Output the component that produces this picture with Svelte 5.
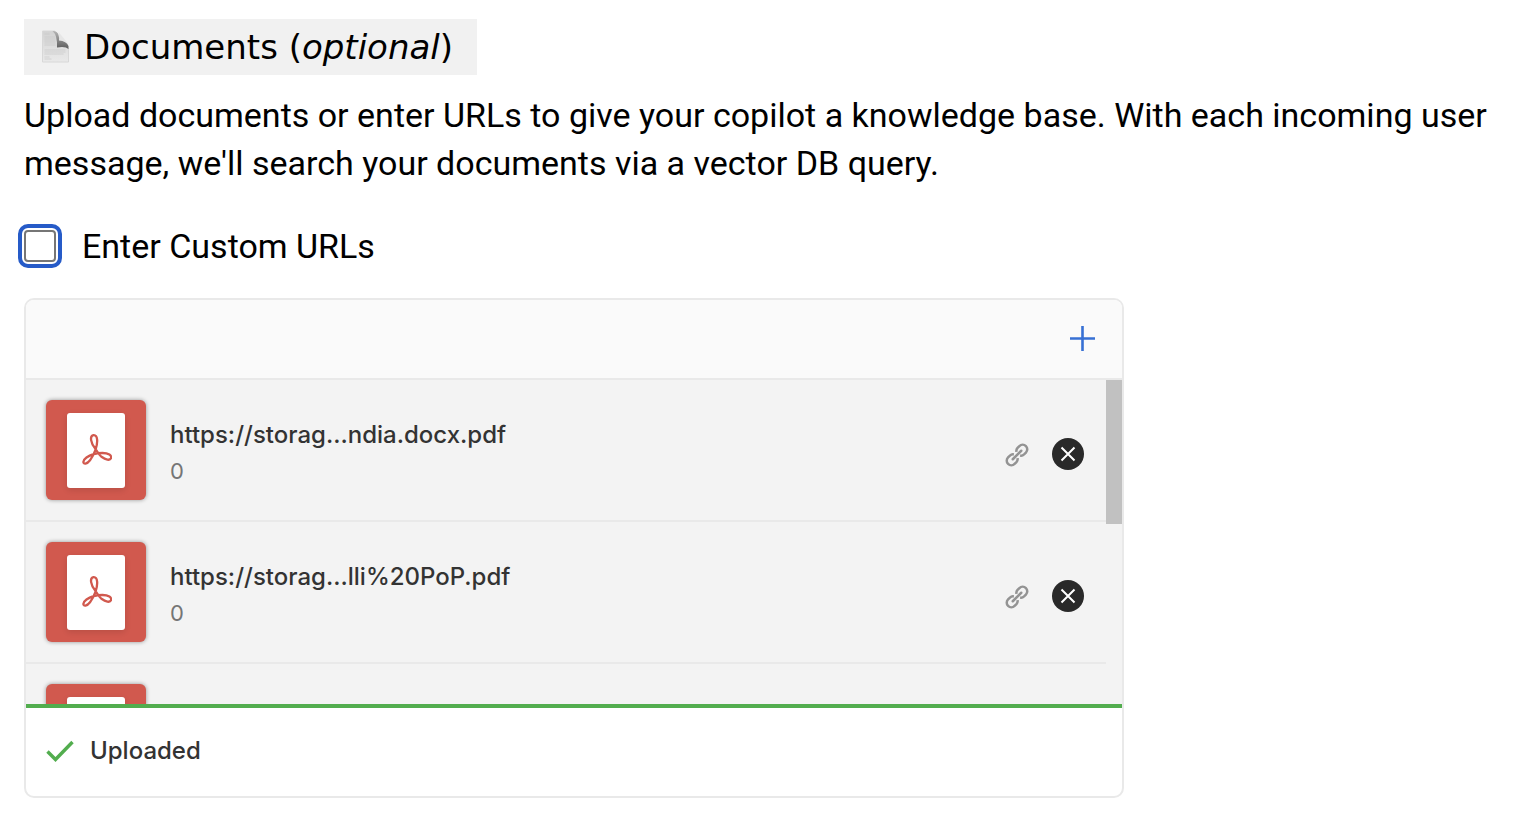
<script>
  const files = [
    { id: 1, name: 'https://storag...ndia.docx.pdf', size: '0' },
    { id: 2, name: 'https://storag...lli%20PoP.pdf', size: '0' },
    { id: 3 }
  ];
  let customUrls = $state(false);
</script>

<main>
  <h1>
    <svg class="page-icon" viewBox="0 0 28 34" aria-hidden="true">
      <defs>
        <linearGradient id="sheet" x1="0" y1="0" x2="0" y2="1">
          <stop offset="0" stop-color="#d2d2d2" />
          <stop offset="0.45" stop-color="#dedede" />
          <stop offset="1" stop-color="#e9e9e9" />
        </linearGradient>
        <linearGradient id="fold" x1="0.5" y1="0" x2="0.5" y2="1">
          <stop offset="0" stop-color="#b5b5b5" />
          <stop offset="1" stop-color="#5c5c5c" />
        </linearGradient>
      </defs>
      <path d="M1 1H13Q17 3 17 15Q25 14 27 19V32H1Z" fill="url(#sheet)" stroke="#d8d8d8" />
      <path d="M17 2L27 14Q24 12 18 11Z" fill="#e6e6e6" />
      <path d="M11 1Q16 1 17 5Q18 8 17.500 10.500Q25 11 27 16V19Q24 16 15.500 17.500Q16 5 11 1Z" fill="url(#fold)" />
      <path d="M3 4H8M3 7H14M3 9H14M3 11H14M3 13H14M3 15H14M3 20H24M3 22H24M3 24H22M3 27H8M3 29H10" stroke="#c9c9c9" stroke-width="0.7" />
    </svg>
    <span>Documents (<em>optional</em>)</span>
  </h1>
  <p class="intro">
    Upload documents or enter URLs to give your copilot a knowledge base. With each incoming user message, we'll search your documents via a vector DB query.
  </p>
  <label class="check">
    <input type="checkbox" bind:checked={customUrls} />
    <span>Enter Custom URLs</span>
  </label>

  <section class="uploader">
    <header>
      <button class="add" aria-label="Add files">
        <svg width="26" height="26" viewBox="0 0 26 26" aria-hidden="true"><path d="M12.500 0V25M0 12.500H25" stroke="#3770d4" stroke-width="2.600" /></svg>
      </button>
    </header>
    <div class="viewport">
      <ul>
        {#each files as file (file.id)}
          <li>
            <div class="preview">
              <div class="sheet">
                <svg width="32" height="32" viewBox="0 0 32 32" aria-hidden="true">
                  <path d="M15.500 15C10.500 9 9.500 1.800 13.500 1.200C18 0.800 18 8.500 15.500 16C13 22 9 29 5.500 29.700C2.500 30 2.500 26.500 6.500 23.500C10.500 20.500 17 19 22.500 19C28.500 19 32 21.500 31 24.200C30 27 25.500 25.700 21.500 22.800C18.500 20.500 17.500 17.500 15.500 15Z" fill="none" stroke="#d1594e" stroke-width="2.300" stroke-linejoin="round" />
                </svg>
              </div>
            </div>
            {#if file.name}
              <div class="info">
                <span class="name">{file.name}</span>
                <span class="size">{file.size}</span>
              </div>
              <button class="link" aria-label="Copy link">
                <svg width="24" height="24" viewBox="-12 -12 24 24" fill="none" stroke="#939393" stroke-width="2.500" aria-hidden="true">
                  <g transform="rotate(-45)">
                    <path d="M-1.800 2.600A4.600 4.600 0 0 1 -5.400 4.600H-8A4.600 4.600 0 0 1 -8 -4.600H-5.400A4.600 4.600 0 0 1 -1.800 -2.600" />
                    <path d="M1.800 -2.600A4.600 4.600 0 0 1 5.400 -4.600H8A4.600 4.600 0 0 1 8 4.600H5.400A4.600 4.600 0 0 1 1.800 2.600" />
                    <path d="M-6 0H6" stroke-linecap="round" />
                  </g>
                </svg>
              </button>
              <button class="remove" aria-label="Remove file">
                <svg width="32" height="32" viewBox="0 0 32 32" aria-hidden="true"><circle cx="16" cy="16" r="16" fill="#292929" /><path d="M9.500 9.500L22.500 22.500M22.500 9.500L9.500 22.500" stroke="#fff" stroke-width="2" /></svg>
              </button>
            {/if}
          </li>
        {/each}
      </ul>
      <div class="thumb"></div>
    </div>
    <footer>
      <svg width="28" height="22" viewBox="0 0 28 22" aria-hidden="true"><path d="M1.500 11.500L9.500 19.500L26.500 2" fill="none" stroke="#52ad4e" stroke-width="3.400" /></svg>
      <span>Uploaded</span>
    </footer>
  </section>
</main>

<style>
  :global(body) { margin: 0; background: #fff; }
  main { padding: 19px 24px 20px; font-family: Inter, sans-serif; color: #000; }
  h1 { display: flex; align-items: center; width: fit-content; height: 56px; margin: 0; padding: 0 24px 0 17px; gap: 14px; background: #f1f1f1; box-sizing: border-box; font: 400 34px/56px "DejaVu Sans", sans-serif; }
  .page-icon { width: 29px; height: 34px; }
  .intro, .check { font-family: Roboto, sans-serif; font-size: 34px; line-height: 48px; }
  .intro { margin: 16px 0 0; }
  .check { display: flex; align-items: center; width: fit-content; gap: 26px; margin-top: 35px; }
  input { appearance: none; width: 32px; height: 32px; margin: 0; border: 2px solid #767676; border-radius: 4px; background: #fff; outline: 4px solid #265bc8; outline-offset: 2px; box-sizing: border-box; }
  input:checked { background: #265bc8; }
  .uploader { max-width: 1100px; box-sizing: border-box; margin-top: 28px; border: 2px solid #e9e9e9; border-radius: 10px; overflow: hidden; font-size: 24px; font-weight: 500; color: #333; }
  header { display: flex; align-items: center; justify-content: flex-end; height: 78px; padding: 0 26px; background: #fafafa; border-bottom: 2px solid #e9e9e9; }
  button { display: flex; padding: 0; border: 0; background: none; cursor: pointer; }
  .viewport { position: relative; height: 324px; overflow: hidden; background: #f3f3f3; }
  ul { list-style: none; margin: 0 16px 0 0; padding: 0; }
  li { display: flex; align-items: center; padding: 20px 22px 20px 20px; border-bottom: 2px solid #e9e9e9; }
  .preview { display: flex; align-items: center; justify-content: center; width: 100px; height: 100px; border-radius: 6px; background: #d1594e; box-shadow: 0 0 4px rgba(0, 0, 0, 0.4); }
  .sheet { display: flex; align-items: center; justify-content: center; width: 58px; height: 75px; border-radius: 3px; background: #fff; box-shadow: 0 2px 6px rgba(0, 0, 0, 0.12); }
  .info { display: flex; flex: 1; flex-direction: column; gap: 4px; padding: 6px 0 0 24px; }
  .name { line-height: 32px; }
  .size { font-size: 22px; font-weight: 400; line-height: 32px; color: #757575; }
  .link { margin: 10px 23px 0 0; }
  .remove { margin-top: 8px; }
  .thumb { position: absolute; top: 0; right: 0; width: 16px; height: 144px; background: #c1c1c1; }
  footer { display: flex; align-items: center; gap: 16px; padding: 25px 20px 27px; border-top: 4px solid #52ad4e; line-height: 36px; }
</style>
